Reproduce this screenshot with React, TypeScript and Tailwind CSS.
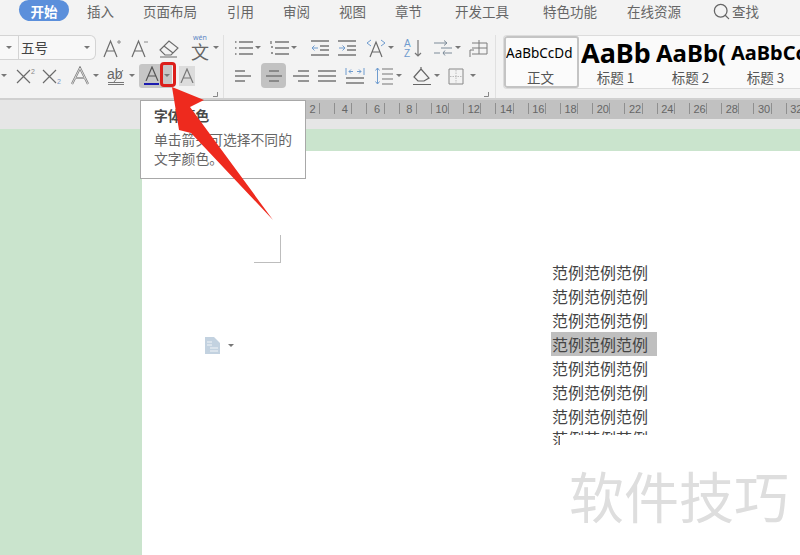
import { ReactNode } from "react";
import { Search } from "lucide-react";

const cjk = "font-['Noto_Sans_CJK_SC','Noto_Sans',sans-serif]";

const tabs = [
  { label: "插入", w: "w-[27px]", ml: "ml-[18px]" },
  { label: "页面布局", w: "w-[54px]", ml: "ml-[29px]" },
  { label: "引用", w: "w-[27px]", ml: "ml-[30px]" },
  { label: "审阅", w: "w-[27px]", ml: "ml-[29px]" },
  { label: "视图", w: "w-[27px]", ml: "ml-[29px]" },
  { label: "章节", w: "w-[27px]", ml: "ml-[29px]" },
  { label: "开发工具", w: "w-[56px]", ml: "ml-[33px]" },
  { label: "特色功能", w: "w-[55px]", ml: "ml-[32px]" },
  { label: "在线资源", w: "w-[55px]", ml: "ml-[29px]" },
];

const rulerMarks = [2, 4, 6, 8, 10, 12, 14, 16, 18, 20, 22, 24, 26, 28, 30, 32];

// small svg wrapper for the ribbon glyphs
function Ico({ w = 20, h = 20, children }: { w?: number; h?: number; children: ReactNode }) {
  return (
    <svg width={w} height={h} viewBox={`0 0 ${w} ${h}`} fill="none" stroke="#6b6b6b" strokeWidth="1" className="shrink-0">
      {children}
    </svg>
  );
}

function Caret({ className = "" }: { className?: string }) {
  return <span className={`h-0 w-0 shrink-0 border-x-[3px] border-t-[3px] border-x-transparent border-t-[#777] ${className}`} />;
}

function BigA({ suffix }: { suffix: "+" | "-" }) {
  return (
    <Ico w={19} h={20}>
      <path d="M1 19 L7.5 3 L14 19 M3.5 13 H11.5" strokeWidth="1.2" />
      {suffix === "+" ? <path d="M14 4 H18 M16 2 V6" stroke="#8a8a8a" /> : <path d="M13 4 H17" stroke="#8a8a8a" />}
    </Ico>
  );
}

function Lines({ d }: { d: string }) {
  return (
    <Ico w={20} h={20}>
      <path d={d} strokeWidth="1.3" stroke="#777" />
    </Ico>
  );
}

function Launcher() {
  return (
    <svg width="5" height="5" viewBox="0 0 5 5" fill="none" stroke="#888" className="shrink-0">
      <path d="M4.5 0 V4.5 H0" />
    </svg>
  );
}

function ScriptX({ sub }: { sub?: boolean }) {
  return (
    <Ico w={20} h={18}>
      <path d="M1 3 L14 16 M14 3 L1 16" strokeWidth="1.2" />
      <text x="15" y={sub ? 17 : 7} fontSize="7" stroke="none" fill={sub ? "#7a97c4" : "#888"} fontFamily="Liberation Sans">
        2
      </text>
    </Ico>
  );
}

function StyleItem({ sample, label, className, active }: { sample: string; label: string; className: string; active?: boolean }) {
  return (
    <div
      className={`flex w-[75px] shrink-0 flex-col items-center overflow-hidden ${
        active ? "rounded-[3px] border-2 border-[#c4c4c4] bg-[#fbfbfb]" : "border-2 border-transparent"
      }`}
    >
      <div className={`flex h-[31px] w-[71px] items-center overflow-hidden whitespace-nowrap font-['Noto_Sans',sans-serif] text-black ${className}`}>
        {sample}
      </div>
      <div className={`${cjk} -translate-x-[1px] text-[13.5px] leading-[18px] text-[#555]`}>{label}</div>
    </div>
  );
}

export default function App() {
  return (
    <div className="relative flex h-[555px] w-[800px] flex-col overflow-hidden bg-[#cae4cd]">
      {/* tab bar */}
      <div className={`${cjk} flex h-[24px] items-start bg-[#f3f3f3] pl-[19px] text-[13.5px] leading-[22px] text-[#666]`}>
        <div className="flex h-[21px] w-[50px] items-center justify-center rounded-b-[12px] rounded-t-[10px] bg-[#5b8fdb] font-bold text-white">开始</div>
        {tabs.map((t) => (
          <div key={t.label} className={`${t.ml} ${t.w} whitespace-nowrap`}>
            {t.label}
          </div>
        ))}
        <div className="ml-[30px] flex items-center gap-[1px]">
          <Search className="h-[19px] w-[19px] text-[#666]" strokeWidth={1.6} />
          <span>查找</span>
        </div>
      </div>

      {/* ribbon */}
      <div className="flex h-[76px] border-b-2 border-[#d0d0d0] bg-[#f3f3f3] pt-[11px]">
        <div className="relative flex h-[63px] w-[224px] shrink-0 flex-col border-r border-[#e0e0e0]">
          {/* row 1 */}
          <div className="flex h-[25px] items-center">
            <div className={`${cjk} flex h-[25px] w-[96px] items-center rounded-r-[6px] border border-l-0 border-[#d4d4d4] bg-[#f8f8f8] text-[13.5px] text-[#444]`}>
              <span className="flex w-[18px] justify-center"><Caret /></span>
              <span className="h-full border-l border-[#d4d4d4]" />
              <span className="ml-[2px] flex-1">五号</span>
              <Caret className="mr-[5px]" />
            </div>
            <div className="ml-[7px] flex items-center">
              <BigA suffix="+" />
              <div className="ml-[9px]">
                <BigA suffix="-" />
              </div>
              <div className="ml-[9px]">
                <Ico w={20} h={20}>
                  <path d="M1 12 L10 3 L19 10 L12 17 H6 Z M5 8 L14 15 M1 19 H18" strokeWidth="1.1" />
                </Ico>
              </div>
              <div className="relative ml-[12px] h-[24px] w-[19px]">
                <span className="absolute -top-[2px] left-[2px] text-[7px] leading-[8px] text-[#5b86c4]">wén</span>
                <span className={`${cjk} absolute bottom-0 left-0 text-[18px] leading-[18px] text-[#666]`}>文</span>
              </div>
              <Caret className="ml-[3px]" />
            </div>
          </div>
          {/* row 2 */}
          <div className="mt-[3px] flex h-[25px] items-center">
            <Caret className="ml-[1px]" />
            <div className="ml-[9px] w-[26px]">
              <ScriptX />
            </div>
            <div className="w-[26px]">
              <ScriptX sub />
            </div>
            <div className="ml-[3px]">
              <Ico w={18} h={20}>
                <path d="M1 18 L9 2 L17 18 M4 12 H14" strokeWidth="2.2" stroke="#777" />
                <path d="M1 18 L9 2 L17 18 M4 12 H14" strokeWidth="0.8" stroke="#f3f3f3" />
              </Ico>
            </div>
            <Caret className="ml-[4px]" />
            <div className="ml-[8px]">
              <Ico w={19} h={21}>
                <text x="0" y="14" fontSize="14" fill="#666" stroke="none" fontFamily="Liberation Sans">ab</text>
                <path d="M7 17 L16 5 M1 17.5 H17 M1 19.5 H17" stroke="#777" />
              </Ico>
            </div>
            <Caret className="ml-[3px]" />
            <div className="relative ml-[4px] flex h-[24px] w-[33px] items-center rounded-l-[3px] bg-[#c6c6c6] pl-[5px]">
              <div className="flex w-[15px] flex-col items-center">
                <Ico w={14} h={15}>
                  <path d="M1 15 L7 1 L13 15 M3 10 H11" strokeWidth="1.2" stroke="#555" />
                </Ico>
                <span className="mt-[2px] h-[2px] w-[15px] bg-[#1c1cb0]" />
              </div>
              <Caret className="ml-[5px]" />
            </div>
            <div className="ml-[7px] flex h-[20px] w-[16px] items-center justify-center bg-[#dcdcdc]">
              <Ico w={14} h={15}>
                <path d="M1 15 L7 1 L13 15 M3 10 H11" strokeWidth="1.2" stroke="#777" />
              </Ico>
            </div>
          </div>
          <div className="absolute bottom-[1px] right-[5px]">
            <Launcher />
          </div>
        </div>

        <div className="relative flex h-[63px] w-[272px] shrink-0 flex-col border-r border-[#e0e0e0] pl-[10px]">
          {/* row 1 */}
          <div className="flex h-[25px] items-center">
            <Lines d="M1 4 H2.5 M1 10 H2.5 M1 16 H2.5 M5 4 H19 M5 10 H19 M5 16 H19" />
            <Caret className="ml-[1px]" />
            <div className="ml-[9px]">
              <Lines d="M1 3 V6 M1 9 H3 M1 15 H3 M5 4 H19 M5 10 H19 M5 16 H19" />
            </div>
            <Caret className="ml-[1px]" />
            <div className="ml-[13px]">
              <Ico>
                <path d="M1 3 H19 M10 8 H19 M10 12 H19 M1 17 H19" strokeWidth="1.3" stroke="#777" />
                <path d="M8 10 H2 M4.5 7.5 L2 10 L4.5 12.5" stroke="#6f9ccf" />
              </Ico>
            </div>
            <div className="ml-[7px]">
              <Ico>
                <path d="M1 3 H19 M10 8 H19 M10 12 H19 M1 17 H19" strokeWidth="1.3" stroke="#777" />
                <path d="M2 10 H8 M5.5 7.5 L8 10 L5.5 12.5" stroke="#6f9ccf" />
              </Ico>
            </div>
            <div className="ml-[9px]">
              <Ico>
                <path d="M4 19 L10 4 L16 19 M6 14 H14" strokeWidth="1.2" />
                <path d="M1 5 L5 2 M1 5 L5 8 M19 5 L15 2 M19 5 L15 8" stroke="#6f9ccf" />
              </Ico>
            </div>
            <Caret className="ml-[2px]" />
            <div className="ml-[9px]">
              <Ico>
                <text x="1" y="9" fontSize="10" fill="#6f9ccf" stroke="none" fontFamily="Liberation Sans">A</text>
                <text x="1" y="19" fontSize="10" fill="#6f9ccf" stroke="none" fontFamily="Liberation Sans">Z</text>
                <path d="M15 2 V18 M12 15 L15 18 L18 15" stroke="#777" strokeWidth="1.2" />
              </Ico>
            </div>
            <div className="ml-[10px]">
              <Ico>
                <path d="M1 5 H14 M11 2.5 L14 5 L11 7.5 M8 10 H19 M1 15 H7 M19 15 H10 M12 12.5 L10 15 L12 17.5" stroke="#7c8b99" />
              </Ico>
            </div>
            <Caret className="ml-[2px]" />
            <div className="ml-[8px]">
              <Ico w={19} h={20}>
                <path d="M3 5 H18 V16 H3 M10 2 V16 M3 10 H18 M1 12 V19 M1 12 H5" stroke="#7d7d7d" />
              </Ico>
            </div>
          </div>
          {/* row 2 */}
          <div className="mt-[3px] flex h-[25px] items-center">
            <Lines d="M1 5 H11 M1 10 H17 M1 15 H11" />
            <div className="ml-[7px] flex h-[25px] w-[25px] items-center justify-center rounded-[4px] bg-[#c2c2c2]">
              <Lines d="M5 5 H15 M2 10 H18 M5 15 H15" />
            </div>
            <div className="ml-[5px]">
              <Lines d="M7 5 H18 M2 10 H18 M7 15 H18" />
            </div>
            <div className="ml-[6px]">
              <Lines d="M1 5 H19 M1 10 H19 M1 15 H19" />
            </div>
            <div className="ml-[8px]">
              <Ico>
                <path d="M1 2 V9 M19 2 V9 M4 5.5 H8 M4 5.5 L6 3.5 M4 5.5 L6 7.5 M16 5.5 H12 M16 5.5 L14 3.5 M16 5.5 L14 7.5" stroke="#6f9ccf" />
                <path d="M1 12 H19 M1 17 H19" stroke="#777" strokeWidth="1.3" />
              </Ico>
            </div>
            <div className="ml-[9px]">
              <Ico>
                <path d="M8 3 H19 M8 8 H19 M8 13 H19 M8 18 H19" stroke="#777" strokeWidth="1.2" />
                <path d="M3.5 2 V18 M1.5 4.5 L3.5 2 L5.5 4.5 M1.5 15.5 L3.5 18 L5.5 15.5" stroke="#6f9ccf" />
              </Ico>
            </div>
            <Caret className="ml-[2px]" />
            <div className="ml-[10px]">
              <Ico>
                <path d="M2 11 L9 3 L17 12 L12 15 H6 Z M9 3 V1 M1 18.5 H19" stroke="#666" strokeWidth="1.2" />
              </Ico>
            </div>
            <Caret className="ml-[2px]" />
            <div className="ml-[7px]">
              <Ico w={18} h={20}>
                <path d="M2 3 H16 V18 H2 Z" stroke="#888" />
                <path d="M9 4 V17 M3 10.5 H15" stroke="#bbb" strokeDasharray="1.5 1" />
              </Ico>
            </div>
            <Caret className="ml-[5px]" />
          </div>
          <div className="absolute bottom-[1px] right-[6px]">
            <Launcher />
          </div>
        </div>

        {/* style gallery */}
        <div className="ml-[7px] flex h-[54px] flex-1 overflow-hidden rounded-l-[4px] border border-r-0 border-[#dcdcdc] bg-[#fafafa]">
          <StyleItem active sample="AaBbCcDd" label="正文" className="text-[13.5px]" />
          <StyleItem sample="AaBb" label="标题 1" className="text-[27px] font-bold" />
          <StyleItem sample="AaBb(" label="标题 2" className="text-[24px] font-bold" />
          <StyleItem sample="AaBbCc" label="标题 3" className="text-[20px] font-bold" />
        </div>
      </div>

      {/* ruler band */}
      <div className="h-[29px] bg-[#e6e6e6]">
        <div className="ml-[142px] flex h-[19px] overflow-hidden bg-[#c1c1c1] pl-[164px]">
          {rulerMarks.map((n) => (
            <div key={n} className="flex h-[19px] w-[32.25px] shrink-0 items-start pt-[2px] font-['Liberation_Sans',sans-serif] text-[11px] leading-[14px] text-[#666]">
              <span className="w-[13px] text-center">{n}</span>
              <span className="mt-[1px] h-[11px] border-l border-[#8f8f8f]" />
              <span className="ml-[14px] mt-[1px] h-[11px] border-l border-[#8f8f8f]" />
            </div>
          ))}
        </div>
      </div>

      {/* document area */}
      <div className="flex-1 pl-[142px] pt-[22px]">
        <div className="flex h-full bg-white">
          <div className="w-[409px] shrink-0">
            <div className="ml-[112px] mt-[84px] h-[28px] w-[27px] border-b border-r border-[#bdbdbd]" />
            <div className="ml-[63px] mt-[74px] flex items-center gap-[8px]">
              <svg width="15" height="17" viewBox="0 0 15 17" className="shrink-0">
                <path d="M0 0 H9 L15 6 V17 H0 Z" fill="#c3d2e0" />
                <path d="M2 5 H7 M2 8 H7 M5 11 H13 M5 14 H13" stroke="#f2f5f8" />
              </svg>
              <Caret />
            </div>
          </div>
          <div className={`${cjk} pt-[109px] text-[16px] leading-[24px] text-[#444]`}>
            {[0, 1, 2, 3, 4, 5, 6].map((i) => (
              <div key={i} className={`w-[106px] whitespace-nowrap pl-[1px] ${i === 3 ? "bg-[#bfbfbf]" : ""}`}>
                范例范例范例
              </div>
            ))}
            <div className="h-[7px] overflow-hidden whitespace-nowrap pl-[1px] leading-[21px]">范例范例范例</div>
            <div className="ml-[1px] h-[10px] w-[8px] overflow-hidden leading-[16px]">
              <div className="-mt-[5px]">范</div>
            </div>
          </div>
        </div>
      </div>

      {/* tooltip */}
      <div className={`${cjk} absolute left-[140px] top-[100px] h-[79px] w-[166px] border border-[#a8a8a8] bg-white pl-[13px] pt-[3px] text-[13.8px] text-[#666]`}>
        <div className="font-bold leading-[22px] text-[#4a4a4a]">字体颜色</div>
        <div className="mt-[4px] w-[146px] leading-[19px]">单击箭头可选择不同的文字颜色。</div>
      </div>

      {/* red callout */}
      <div className="absolute left-[160px] top-[62px] h-[25px] w-[16px] rounded-[4px] border-[3px] border-[#dc1f1b]" />
      <svg width="800" height="555" viewBox="0 0 800 555" className="pointer-events-none absolute left-0 top-0">
        <polygon points="172,87 204,100 190,107 273,220 191,133 179,130" fill="#ee2a1e" />
      </svg>

      {/* watermark */}
      <div className={`${cjk} absolute left-[569px] top-[454px] whitespace-nowrap text-[55px] leading-[80px] text-[#dedede]`}>软件技巧</div>
    </div>
  );
}
